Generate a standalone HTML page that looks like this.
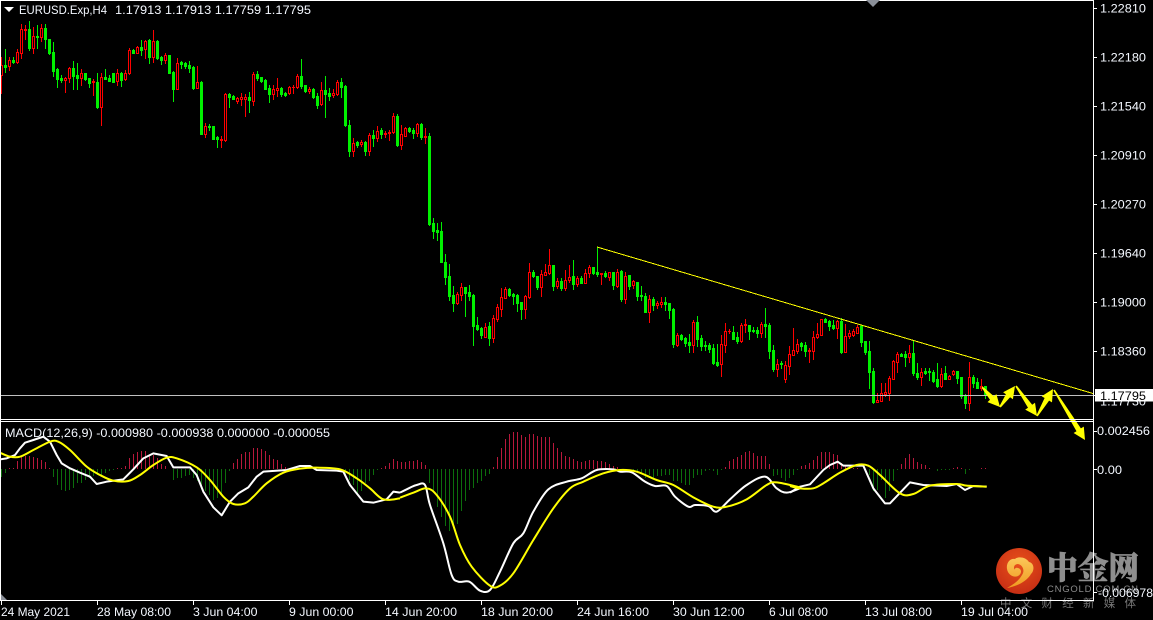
<!DOCTYPE html>
<html><head><meta charset="utf-8"><title>EURUSD H4</title>
<style>
html,body{margin:0;padding:0;background:#000;width:1153px;height:620px;overflow:hidden}
svg{display:block;position:absolute;left:0;top:0}
text{font-family:"Liberation Sans","Noto Sans CJK SC",sans-serif;font-size:12px;fill:#f4f8ff}
</style></head><body>
<svg id="s" width="1153" height="620" viewBox="0 0 1153 620" xmlns="http://www.w3.org/2000/svg">
<rect width="1153" height="620" fill="#000"/>
<g id="hist" shape-rendering="crispEdges"></g>
<g id="cand" shape-rendering="crispEdges"></g>
<line x1="597" y1="247" x2="1093" y2="393.5" stroke="#ffff00" stroke-width="1" shape-rendering="crispEdges"/>
<rect x="1" y="395" width="1092" height="1" fill="#c0c0c0"/>
<g fill="none" stroke-width="6" stroke-linejoin="round">
<g transform="translate(0,420) scale(.33333)" stroke="#fff">
<polyline points="0,118 20,115 45,105 60,85 75,68 100,60 130,50 150,65 170,105 185,130 210,145 240,158 270,170 290,192 320,185 370,178 400,148 430,115 460,100 500,108 520,142 570,142 590,165 610,215 640,262 665,286 690,245 715,220 745,202 770,170 790,155 860,150 900,138 930,138 950,150 1010,152 1030,155 1050,195 1090,245 1120,248 1160,238 1180,215 1200,218"/>
</g>
<g transform="translate(400,420) scale(.33333)" stroke="#fff">
<polyline class="sm" points="0,218 30,203 50,195 75,195 90,255 130,370 155,465 175,485 208,485 240,512 270,510 300,455 340,370 370,340 400,275 445,208 500,185 545,175 590,150 640,148 660,155 695,157 735,185 765,198 800,198 825,230 865,260 885,255 925,258 950,275 990,238 1040,195 1095,170 1130,205 1160,218 1200,205"/>
</g>
<g transform="translate(790,420) scale(.33333)" stroke="#fff">
<polyline points="0,218 30,200 60,193 100,150 120,135 143,125 160,137 220,137 250,205 285,250 300,250 360,187 400,195 470,198 500,192 525,210 550,198 590,200"/>
</g>
<g transform="translate(0,420) scale(.33333)" stroke="#ffff00">
<polyline class="sm" points="0,98 30,110 60,110 100,90 150,65 175,65 210,90 260,140 300,165 340,182 385,183 420,165 460,135 500,113 530,115 590,142 630,180 670,230 700,252 735,250 760,230 800,190 850,158 900,146 950,143 1020,148 1070,175 1110,205 1150,238 1200,235"/>
</g>
<g transform="translate(400,420) scale(.33333)" stroke="#ffff00">
<polyline class="sm" points="0,233 40,218 80,205 110,225 150,290 180,375 215,440 270,497 300,497 340,460 400,360 460,265 510,205 550,185 610,160 660,150 710,155 770,180 820,195 880,232 940,260 980,260 1040,238 1100,195 1130,187 1200,202"/>
</g>
<g transform="translate(790,420) scale(.33333)" stroke="#ffff00">
<polyline class="sm" points="0,198 30,205 70,205 100,190 150,158 200,135 235,137 270,165 330,220 370,222 420,197 500,192 530,197 590,200"/>
</g>
</g>
<g id="arrows" fill="#ffff00"></g>

<!-- watermark -->
<defs><radialGradient id="lg" cx=".5" cy=".35" r=".7"><stop offset="0" stop-color="#e8501a"/><stop offset="1" stop-color="#c42c14"/></radialGradient>
<linearGradient id="ly" x1="0" y1="0" x2="0" y2="1"><stop offset="0" stop-color="#fbc75a"/><stop offset="1" stop-color="#f09a20"/></linearGradient></defs>
<circle cx="1019" cy="571" r="23" fill="url(#lg)"/>
<path d="M1007 588C1018 586 1027 581 1031 574C1035 570 1034 563 1029 562C1026 557 1018 556 1015 559C1010 558 1006 563 1007 569C1008 575 1014 578 1018 576C1022 574 1022 569 1018 568C1016 567 1014 569 1015 570C1013 568 1014 564 1018 564C1023 565 1025 571 1022 575C1018 582 1012 585 1007 588Z" fill="url(#ly)"/>
<text x="1047" y="579" textLength="92" lengthAdjust="spacingAndGlyphs" stroke="#8e8e8e" stroke-width=".7" style="font-family:'Noto Serif CJK SC','Noto Sans CJK SC',serif;font-size:31px;font-weight:900;fill:#8e8e8e">中金网</text>
<text x="1047" y="592" textLength="91" lengthAdjust="spacing" style="font-size:9.5px;fill:#8a8a8a">CNGOLD.COM.CN</text>
<text x="1000" y="607" textLength="136" lengthAdjust="spacing" style="font-size:11.5px;fill:#777">中文财经新媒体</text>

<!-- frame -->
<g shape-rendering="crispEdges" fill="#fff">
<rect x="0" y="0" width="1093" height="1"/>
<rect x="0" y="0" width="1" height="600"/>
<rect x="1093" y="0" width="1" height="601"/>
<rect x="0" y="419" width="1093" height="1"/>
<rect x="0" y="421" width="1093" height="1"/>
<rect x="0" y="600" width="1094" height="1"/>
<path d="M1094 8h3v1h-3zM1094 57h3v1h-3zM1094 106h3v1h-3zM1094 155h3v1h-3zM1094 204h3v1h-3zM1094 253h3v1h-3zM1094 302h3v1h-3zM1094 351h3v1h-3zM1094 431h3v1h-3zM1094 469h3v1h-3zM1094 592h3v1h-3z"/>
<path d="M1 601h1v4h-1zM97 601h1v4h-1zM193 601h1v4h-1zM289 601h1v4h-1zM385 601h1v4h-1zM481 601h1v4h-1zM577 601h1v4h-1zM673 601h1v4h-1zM769 601h1v4h-1zM865 601h1v4h-1zM961 601h1v4h-1z"/>
</g>
<path d="M866 0h14l-7 7z" fill="#8b9099"/>
<path d="M1 594l6 6h-6z" fill="#8b9099"/>
<path d="M4 7h10l-5 5z" fill="#fff"/>

<text x="19" y="14" textLength="88" lengthAdjust="spacingAndGlyphs">EURUSD.Exp,H4</text>
<text x="115" y="14" textLength="196" lengthAdjust="spacingAndGlyphs">1.17913 1.17913 1.17759 1.17795</text>
<text x="5" y="437" textLength="325" lengthAdjust="spacingAndGlyphs">MACD(12,26,9) -0.000980 -0.000938 0.000000 -0.000055</text>

<g>
<text x="1100" y="12.7" textLength="46" lengthAdjust="spacingAndGlyphs">1.22810</text>
<text x="1100" y="61.7" textLength="46" lengthAdjust="spacingAndGlyphs">1.22180</text>
<text x="1100" y="110.7" textLength="46" lengthAdjust="spacingAndGlyphs">1.21540</text>
<text x="1100" y="159.7" textLength="46" lengthAdjust="spacingAndGlyphs">1.20910</text>
<text x="1100" y="208.7" textLength="46" lengthAdjust="spacingAndGlyphs">1.20270</text>
<text x="1100" y="257.7" textLength="46" lengthAdjust="spacingAndGlyphs">1.19640</text>
<text x="1100" y="306.7" textLength="46" lengthAdjust="spacingAndGlyphs">1.19000</text>
<text x="1100" y="355.7" textLength="46" lengthAdjust="spacingAndGlyphs">1.18360</text>
<text x="1100" y="405.7" textLength="46" lengthAdjust="spacingAndGlyphs">1.17730</text>
</g>
<rect x="1095" y="389" width="58" height="12.5" fill="#fff" shape-rendering="crispEdges"/>
<rect x="1094" y="395" width="2" height="1" fill="#fff"/>
<text x="1100" y="400" textLength="46" lengthAdjust="spacingAndGlyphs" style="fill:#000">1.17795</text>
<text x="1097" y="435" textLength="53" lengthAdjust="spacingAndGlyphs">0.002456</text>
<text x="1097" y="474" textLength="25" lengthAdjust="spacingAndGlyphs">0.00</text>
<text x="1098" y="597" textLength="55" lengthAdjust="spacingAndGlyphs">-0.006978</text>

<text x="1" y="616" textLength="69" lengthAdjust="spacingAndGlyphs">24 May 2021</text>
<text x="97" y="616" textLength="74" lengthAdjust="spacingAndGlyphs">28 May 08:00</text>
<text x="193" y="616" textLength="64.5" lengthAdjust="spacingAndGlyphs">3 Jun 04:00</text>
<text x="289" y="616" textLength="64.5" lengthAdjust="spacingAndGlyphs">9 Jun 00:00</text>
<text x="385" y="616" textLength="72" lengthAdjust="spacingAndGlyphs">14 Jun 20:00</text>
<text x="481" y="616" textLength="72" lengthAdjust="spacingAndGlyphs">18 Jun 20:00</text>
<text x="577" y="616" textLength="72" lengthAdjust="spacingAndGlyphs">24 Jun 16:00</text>
<text x="673" y="616" textLength="71.5" lengthAdjust="spacingAndGlyphs">30 Jun 12:00</text>
<text x="769" y="616" textLength="59" lengthAdjust="spacingAndGlyphs">6 Jul 08:00</text>
<text x="865" y="616" textLength="67" lengthAdjust="spacingAndGlyphs">13 Jul 08:00</text>
<text x="961" y="616" textLength="67" lengthAdjust="spacingAndGlyphs">19 Jul 04:00</text>
</svg>
<script>
var D="r57 65 75 93,g49 65 67 72,r57 60 66 70,g57 60 62 63,r49 52 62 63,r24 29 53 58,r25 29 30 39,g21 29 48 50,r27 36 48 53,g25 36 37 48,r24 28 37 41,g24 28 39 48,g39 39 53 54,g42 52 71 76,g68 69 79 87,g75 78 80 82,r77 78 80 92,r67 68 78 82,g61 68 76 89,g63 75 78 89,r69 73 78 85,g73 73 79 80,g78 78 83 87,r79 81 82 95,g73 82 107 108,r73 77 107 125,g69 77 79 79,g75 78 81 81,g73 73 82 82,r69 73 81 85,g72 73 80 86,r70 73 79 80,r48 50 73 74,g49 50 53 53,r46 47 53 53,g40 47 50 55,r40 41 49 58,g39 40 57 63,r30 41 57 62,g40 41 58 59,g56 57 60 64,r53 55 60 63,g55 55 73 73,g71 72 89 101,r58 63 89 89,g61 62 64 68,g62 63 66 68,g61 65 68 72,g66 67 88 89,r66 82 88 88,g81 82 134 134,r123 126 134 137,g124 126 127 130,g126 126 139 139,g136 137 139 147,r136 139 140 147,r93 94 140 141,g93 94 97 107,g95 96 99 99,r97 98 101 103,r93 97 99 105,r94 97 99 116,g92 97 100 112,r72 74 101 105,g71 74 78 80,g77 77 81 82,g79 80 89 89,g85 88 94 102,r85 89 94 99,r78 88 90 96,g87 88 94 96,g92 93 95 96,r86 87 93 94,r85 87 87 93,r74 76 87 88,g59 76 86 88,g85 85 91 92,r87 89 91 93,g88 89 97 98,g93 96 105 108,r82 90 104 105,g76 90 94 117,g88 93 96 100,r89 93 95 97,r80 82 94 95,g78 82 87 97,g85 86 125 126,g120 125 151 156,r138 143 151 156,g141 142 145 147,"+
"r140 142 144 146,g141 142 151 155,r133 135 151 155,g130 135 138 146,r126 131 138 141,g128 130 134 138,r131 133 134 137,r130 132 133 140,r113 116 132 133,g114 116 145 146,r125 134 145 149,r127 128 136 136,g127 128 131 132,g128 130 133 138,r123 124 133 136,g123 124 137 139,r128 136 137 143,g133 136 224 225,g218 223 231 238,g223 230 232 240,g222 231 262 262,g254 262 277 284,g264 276 296 300,g286 295 303 311,r292 294 303 304,r283 287 295 300,g287 287 293 316,g285 292 296 300,g294 295 326 345,g317 325 329 330,g327 328 335 338,r323 327 337 337,g322 326 338 345,r315 318 338 342,r304 307 319 321,r288 297 309 316,r287 289 298 298,g288 289 295 296,g293 294 296 304,g294 295 303 311,g302 302 309 319,r295 296 309 318,r263 272 297 298,g270 272 276 277,g276 276 287 289,r270 274 287 296,r264 272 275 275,r249 265 273 274,g265 265 286 290,r278 281 286 288,g278 281 288 290,r270 280 288 290,r265 277 280 282,g260 276 284 289,r276 278 284 286,g276 278 283 283,r269 273 283 283,r265 267 273 277,g267 267 273 274,g247 272 274 276,r273 273 274 284,g271 273 276 277,r272 272 277 280,g272 272 285 289,r269 272 286 287,g270 271 299 301,r272 276 299 303,g275 275 286 289,r280 281 285 288,g282 282 296 300,g286 295 296 300,g293 296 312 312,r295 299 312 322,g297 299 305 310,r301 303 305 308,r297 302 304 307,g297 302 304 310,g303 303 310 318,g308 309 344 347,r333 335 345 346,g334 335 339 340,g337 338 343 346,g334 342 345 352,r320 322 345 352,g316 322 339 346,g335 338 346 350,g341 345 346 350,g343 345 349 352,"+
"g344 348 363 364,g344 362 365 366,r335 344 364 376,r323 331 345 352,r329 331 331 333,g326 332 339 339,g332 337 341 343,r323 325 341 342,r319 324 325 332,g325 325 331 339,g327 330 331 332,g327 330 333 337,r322 324 333 337,g308 324 326 337,g323 325 351 358,g345 350 369 371,r359 364 369 376,g361 363 364 368,r361 365 379 382,r346 354 366 374,r328 350 355 355,r339 344 351 353,g342 343 346 350,g342 345 351 356,r348 350 351 362,r331 337 351 359,r323 334 337 338,r319 319 335 335,g318 319 322 322,g320 321 326 330,g320 325 328 329,r320 321 328 338,g318 321 352 353,r324 336 352 352,r330 333 336 338,r329 331 335 336,r325 327 333 333,g325 326 342 346,g341 341 352 354,g341 351 372 388,g368 371 402 403,r393 400 402 402,r383 393 401 401,r383 392 394 396,r376 378 393 400,r360 361 379 379,r352 354 362 372,g353 354 356 356,g351 354 357 366,r345 353 357 362,g341 353 373 375,g363 373 377 379,r368 372 377 385,g368 371 373 374,g368 371 372 380,g370 372 381 382,g363 379 386 387,r368 374 386 387,g366 373 379 379,r375 376 379 379,r370 371 374 375,g371 371 378 383,g377 377 396 398,g394 395 403 408,r362 377 403 410,g375 377 383 387,g378 382 388 388,r379 386 388 390,g386 386 395 398";
var H=[-8,-4,1,1,8,12,13,13,12,11,9,7,1,-8,-16,-21,-22,-21,-19,-14,-14,-11,-9,-7,-6,-6,-4,-2,-1,1,1,3,11,15,17,18,18,14,14,11,5,3,0,-11,-9,-9,-7,-6,-9,-12,-17,-22,-26,-31,-29,-26,-14,-2,6,10,15,17,17,21,21,20,18,14,10,9,5,2,1,0,0,0,0,0,0,0,0,0,0,0,0,0,-6,-11,-16,-24,-22,-14,-12,-6,-1,1,3,6,10,8,
7,7,8,8,9,7,4,-14,-22,-38,-48,-57,-62,-56,-55,-42,-32,-21,-19,-14,-12,-7,-5,2,12,21,30,35,37,37,34,32,35,35,33,32,32,32,26,21,17,13,12,10,8,7,8,9,9,8,8,7,5,3,2,0,0,0,-1,-2,-4,-9,-6,-9,-7,-7,-6,-6,-12,-12,-14,-16,-16,-9,-6,-6,-2,-1,-2,-6,-1,2,8,10,12,14,17,18,16,13,13,13,5,-7,-6,-9,-12,-9,-6,-1,
3,4,6,9,13,17,17,17,15,14,6,3,2,1,1,0,0,-6,-22,-21,-11,-29,-22,-12,-1,5,11,15,11,7,5,4,1,0,-2,-1,-1,-1,1,2,1,-5,-1,0,0,1,1];
var g="",r="";
D.split(",").forEach(function(s,i){var c=s[0],p=s.slice(1).split(" ").map(Number),x=1+4*i,h=p[0],t=p[1],b=p[2],l=p[3];
 if(c=="g"){g+="M"+x+" "+h+"h1V"+(l+1)+"h-1zM"+(x-1)+" "+t+"h3V"+(b+1)+"h-3z";}
 else{
  r+="M"+x+" "+h+"h1V"+t+"h-1zM"+x+" "+b+"h1V"+(l+1)+"h-1z";
  r+="M"+(x-1)+" "+t+"h3v1h-3zM"+(x-1)+" "+b+"h3v1h-3zM"+(x-1)+" "+t+"h1V"+(b+1)+"h-1zM"+(x+1)+" "+t+"h1V"+(b+1)+"h-1z";
 }});
document.getElementById("cand").innerHTML='<path d="'+g+'" fill="#00f000"/><path d="'+r+'" fill="#ff0000"/>';
var hr="",hg="";
H.forEach(function(v,i){var x=1+4*i;if(v>0)hr+="M"+x+" "+(469-v)+"h1v"+v+"h-1z";else if(v<0)hg+="M"+x+" 469h1v"+(-v)+"h-1z";});
document.getElementById("hist").innerHTML='<path d="'+hr+'" fill="#b8183c"/><path d="'+hg+'" fill="#0c6e0c"/>';
function arrow(a,b,c,d){var dx=c-a,dy=d-b,L=Math.hypot(dx,dy),u=dx/L,v=dy/L,n=-v,m=u,hl=12,hw=6,q=L-hl,sw=2.6,s0=.8,f=function(x){return x.toFixed(1)};
 var P=[[a+n*s0,b+m*s0],[a+u*q+n*sw,b+v*q+m*sw],[a+u*q+n*hw,b+v*q+m*hw],[c,d],[a+u*q-n*hw,b+v*q-m*hw],[a+u*q-n*sw,b+v*q-m*sw],[a-n*s0,b-m*s0]];
 return '<polygon points="'+P.map(function(p){return f(p[0])+","+f(p[1])}).join(" ")+'"/>';}
document.getElementById("arrows").innerHTML=arrow(982,387,1000,407)+arrow(1000,407,1015,386)+arrow(1016,386,1037,416)+arrow(1037,416,1053,389)+arrow(1054,390,1085,440);
[].slice.call(document.querySelectorAll("polyline.sm")).forEach(function(e){
 var p=e.getAttribute("points").trim().split(/\s+/).map(function(q){return q.split(",").map(Number)}),d="M"+p[0];
 for(var i=0;i<p.length-1;i++){var a=p[i-1]||p[i],b=p[i],c=p[i+1],f=p[i+2]||c;
  d+="C"+(b[0]+(c[0]-a[0])/6).toFixed(1)+" "+(b[1]+(c[1]-a[1])/6).toFixed(1)+" "+(c[0]-(f[0]-b[0])/6).toFixed(1)+" "+(c[1]-(f[1]-b[1])/6).toFixed(1)+" "+c[0]+" "+c[1];}
 var n=document.createElementNS("http://www.w3.org/2000/svg","path");n.setAttribute("d",d);e.parentNode.replaceChild(n,e);});
</script>
</body></html>
